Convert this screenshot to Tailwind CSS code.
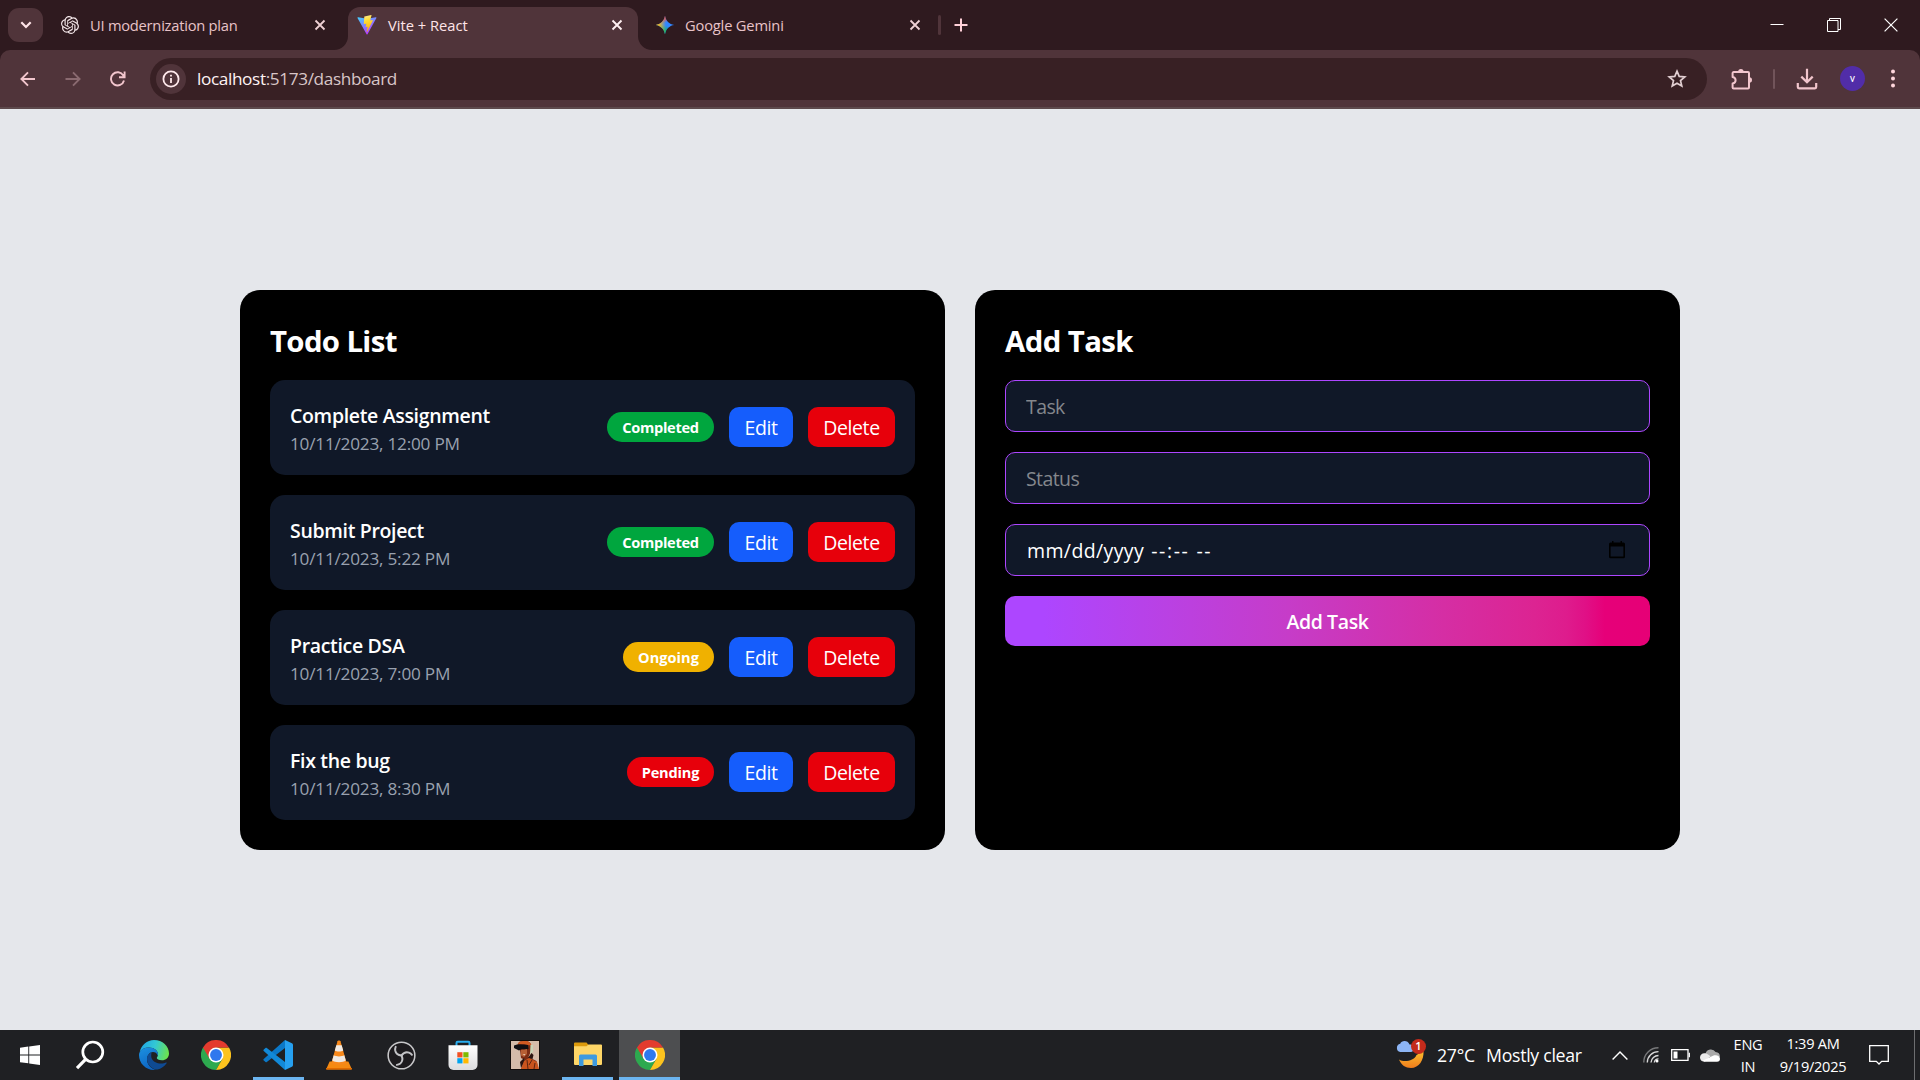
<!DOCTYPE html>
<html lang="en">
<head>
<meta charset="utf-8">
<title>Vite + React</title>
<script src="https://cdn.jsdelivr.net/npm/@tailwindcss/browser@4"></script>
</head>
<body class="flex h-[1080px] w-[1920px] flex-col overflow-hidden bg-gray-200 font-['Open_Sans','Noto_Sans',sans-serif]">

<!-- Tab strip -->
<header class="flex h-[50px] shrink-0 bg-[#2f1a1f] text-[14.7px] text-[#e8c3c8]">
  <button class="mt-2 ml-2 flex h-[34px] w-[35px] items-center justify-center rounded-[11px] bg-[#50343a]">
    <svg class="h-3 w-3" viewBox="0 0 12 12" fill="none" stroke="#ffe4e8" stroke-width="2.2"><path d="M1.3 3.3 6 8l4.7-4.7"/></svg>
  </button>
  <div class="flex h-[50px] w-[305px] items-center pl-[18px] pr-[22px]">
    <svg class="h-[18px] w-[18px]" viewBox="0 0 24 24" fill="#f3e6e8"><path d="M22.28 9.82a5.98 5.98 0 0 0-.52-4.91 6.05 6.05 0 0 0-6.51-2.9A6.07 6.07 0 0 0 4.98 4.18a5.98 5.98 0 0 0-4 2.9 6.05 6.05 0 0 0 .74 7.1 5.98 5.98 0 0 0 .51 4.91 6.05 6.05 0 0 0 6.52 2.9A5.98 5.98 0 0 0 13.26 24a6.06 6.06 0 0 0 5.77-4.21 5.99 5.99 0 0 0 4-2.9 6.06 6.06 0 0 0-.75-7.07zM13.26 22.43a4.48 4.48 0 0 1-2.88-1.04l.14-.08 4.78-2.76a.8.8 0 0 0 .39-.68v-6.74l2.02 1.17a.07.07 0 0 1 .04.05v5.58a4.5 4.5 0 0 1-4.49 4.5zM3.6 18.3a4.47 4.47 0 0 1-.54-3.01l.14.08 4.78 2.76a.77.77 0 0 0 .78 0l5.84-3.37v2.33a.08.08 0 0 1-.03.06L9.74 19.95a4.5 4.5 0 0 1-6.14-1.65zM2.34 7.9a4.49 4.49 0 0 1 2.37-1.98v5.68a.77.77 0 0 0 .39.68l5.81 3.35-2.02 1.17a.08.08 0 0 1-.07 0L3.99 14.02A4.5 4.5 0 0 1 2.34 7.9zm16.6 3.86-5.84-3.39 2.02-1.16a.08.08 0 0 1 .07 0l4.83 2.79a4.49 4.49 0 0 1-.68 8.1v-5.67a.79.79 0 0 0-.4-.67zm2.01-3.03-.14-.08-4.78-2.78a.78.78 0 0 0-.78 0L9.41 9.23V6.9a.07.07 0 0 1 .03-.06l4.83-2.79a4.5 4.5 0 0 1 6.68 4.68zM8.31 12.86l-2.02-1.16a.08.08 0 0 1-.04-.06V6.07a4.5 4.5 0 0 1 7.37-3.45l-.14.08-4.78 2.76a.8.8 0 0 0-.39.68zm1.1-2.37 2.6-1.5 2.6 1.5v3l-2.6 1.5-2.6-1.5z"/></svg>
    <span class="ml-[11px] tracking-[-0.24px]">UI modernization plan</span>
    <svg class="ml-auto h-3 w-3" viewBox="0 0 12 12" stroke="#efd0d4" stroke-width="1.8"><path d="M1.5 1.5l9 9M10.5 1.5l-9 9"/></svg>
  </div>
  <div class="relative mt-[7px] flex h-[43px] w-[290px] items-center rounded-t-xl bg-[#50343a] pr-[15px] pb-[7px] pl-[9px] text-[#ffe4e8]">
    <svg class="absolute bottom-0 -left-3.5 h-3.5 w-3.5" viewBox="0 0 14 14" fill="#50343a"><path d="M14 0v14H0A14 14 0 0 0 14 0z"/></svg>
    <svg class="absolute -right-3.5 bottom-0 h-3.5 w-3.5" viewBox="0 0 14 14" fill="#50343a"><path d="M0 0v14h14A14 14 0 0 1 0 0z"/></svg>
    <svg class="h-5 w-5" viewBox="0 0 20 20">
      <defs>
        <linearGradient id="va" x1="0" y1="0" x2=".6" y2="1"><stop stop-color="#41d1ff"/><stop offset="1" stop-color="#bd34fe"/></linearGradient>
        <linearGradient id="vb" x1=".4" y1="0" x2=".6" y2="1"><stop stop-color="#ffea83"/><stop offset=".3" stop-color="#ffdd35"/><stop offset="1" stop-color="#ffa800"/></linearGradient>
      </defs>
      <path d="M19.4 2.9 10.5 19.3c-.2.4-.7.4-.9 0L.5 2.9c-.2-.4.1-.8.6-.7L10 3.8l8.8-1.6c.5-.1.8.3.6.7z" fill="url(#va)"/>
      <path d="M14.2.1 7.5 1.4c-.2 0-.2.1-.2.3l-.5 7.2c0 .2.2.3.3.2l1.9-.4c.2 0 .4.1.3.3l-.6 2.8c0 .2.2.4.4.3l1.1-.3c.2-.1.4.1.4.3l-.9 4.4c-.1.3.3.4.5.2l.1-.2 5.500-11c.1-.2-.1-.4-.3-.4l-2 .4c-.2 0-.3-.1-.3-.3L14.5.4c.1-.2-.1-.3-.3-.3z" fill="url(#vb)"/>
    </svg>
    <span class="ml-[11px]">Vite + React</span>
    <svg class="ml-auto h-3 w-3" viewBox="0 0 12 12" stroke="#fff0f2" stroke-width="1.9"><path d="M1.5 1.5l9 9M10.5 1.5l-9 9"/></svg>
  </div>
  <div class="flex h-[50px] w-[300px] items-center pr-[17px] pl-[17px]">
    <svg class="h-5 w-5" viewBox="0 0 20 20">
      <defs>
        <linearGradient id="gy" x1="0" x2=".55" y1="0" y2="0"><stop stop-color="#fbbc04"/><stop offset=".3" stop-color="#f5b820"/><stop offset="1" stop-color="#f5b820" stop-opacity="0"/></linearGradient>
        <linearGradient id="gr" x1="0" x2=".2" y1="0" y2=".5"><stop stop-color="#f94543"/><stop offset=".5" stop-color="#f94543"/><stop offset="1" stop-color="#f94543" stop-opacity="0"/></linearGradient>
        <linearGradient id="gg" x1=".3" x2=".45" y1="1" y2=".5"><stop stop-color="#08b962"/><stop offset=".4" stop-color="#08b962"/><stop offset="1" stop-color="#08b962" stop-opacity="0"/></linearGradient>
      </defs>
      <path d="M10 .8c.6 4.8 4.400 8.600 9.200 9.200-4.800.6-8.600 4.400-9.200 9.200C9.400 14.400 5.600 10.600.8 10 5.600 9.400 9.400 5.600 10 .8z" fill="#3186ff"/>
      <path d="M10 .8c.6 4.800 4.400 8.600 9.200 9.200-4.800.6-8.600 4.400-9.200 9.200C9.400 14.400 5.600 10.600.8 10 5.600 9.400 9.400 5.600 10 .8z" fill="url(#gg)"/>
      <path d="M10 .8c.6 4.800 4.400 8.600 9.200 9.200-4.800.6-8.600 4.400-9.200 9.200C9.400 14.400 5.600 10.600.8 10 5.600 9.400 9.400 5.600 10 .8z" fill="url(#gr)"/>
      <path d="M10 .8c.6 4.800 4.400 8.600 9.200 9.200-4.800.6-8.600 4.400-9.200 9.200C9.400 14.400 5.600 10.600.8 10 5.600 9.400 9.400 5.600 10 .8z" fill="url(#gy)"/>
    </svg>
    <span class="ml-2.5 tracking-[-0.18px]">Google Gemini</span>
    <svg class="ml-auto h-3 w-3" viewBox="0 0 12 12" stroke="#efd0d4" stroke-width="1.8"><path d="M1.5 1.5l9 9M10.5 1.5l-9 9"/></svg>
  </div>
  <div class="mt-[15px] h-5 w-[2.5px] rounded-full bg-[#50343a]"></div>
  <svg class="mt-[18px] ml-[13px] h-3.5 w-3.5" viewBox="0 0 14 14" stroke="#ffd0d8" stroke-width="2"><path d="M7 .5v13M.5 7h13"/></svg>
  <div class="mr-[22px] ml-auto flex items-center gap-[43px] pb-px">
    <svg class="h-3.5 w-3.5" viewBox="0 0 14 14" stroke="#fff" stroke-width="1"><path d="M.5 6.5h13"/></svg>
    <svg class="h-3.5 w-3.5" viewBox="0 0 14 14" fill="none" stroke="#fff" stroke-width="1"><path d="M.5 2.5h10.500v11H.500zM2.500 2.500V.500h11v11h-2.500"/></svg>
    <svg class="h-3.5 w-3.5" viewBox="0 0 14 14" stroke="#fff" stroke-width="1.2"><path d="M.6.6l12.800 12.800M13.4.6.6 13.4"/></svg>
  </div>
</header>

<!-- Toolbar -->
<div class="h-[59px] shrink-0 bg-[#2f1a1f]">
<nav class="flex h-full items-center rounded-t-[10px] border-b-2 border-[#5d494c] bg-[#50343a] pl-5">
  <svg class="h-4 w-4" viewBox="0 0 16 16" fill="none" stroke="#f2c6cd" stroke-width="1.9"><path d="M15 8H1.5M8 1.3 1.4 8 8 14.7"/></svg>
  <svg class="ml-[29px] h-4 w-4" viewBox="0 0 16 16" fill="none" stroke="#8a6a70" stroke-width="1.9"><path d="M.5 8h14M8 1.3 14.6 8 8 14.7"/></svg>
  <svg class="ml-[29px] h-4 w-4" viewBox="0 0 16 16" fill="none" stroke="#f2c6cd" stroke-width="1.9"><path d="M14 9.5A6.6 6.6 0 1 1 13.3 4.5L14.200 5.800M14.6.5v5.700H9"/></svg>
  <div class="ml-6 flex h-[42px] w-[1557px] items-center rounded-full bg-[#382024] pr-5 pl-1.5">
    <div class="flex h-[30px] w-[30px] items-center justify-center rounded-full bg-[#50343a]">
      <svg class="h-[18px] w-[18px]" viewBox="0 0 18 18" fill="none" stroke="#ffe9ec" stroke-width="1.8"><circle cx="9" cy="9" r="7.6"/><path d="M9 8v5M9 4.7v1.9"/></svg>
    </div>
    <span class="mt-px ml-[11px] text-[17.2px] tracking-[-0.37px] text-[#d8c6c8]"><span class="text-[#fff3f4]">localhost</span>:5173/dashboard</span>
    <svg class="ml-auto h-[19px] w-5" viewBox="0 0 20 19" fill="none" stroke="#e2cfd2" stroke-width="1.7"><path d="M10 2.2l2.2 5.200 5.600.5-4.300 3.700 1.300 5.500L10 14.200l-4.800 2.900 1.300-5.500L2.200 7.900l5.600-.5z"/></svg>
  </div>
  <svg class="ml-6 h-[22px] w-[22px]" viewBox="0 0 22 22" fill="none" stroke="#f2c6cd" stroke-width="2"><path d="M1.6 5.1a1 1 0 0 1 1-1H17a1 1 0 0 1 1 1V19.5a1 1 0 0 1-1 1H2.6a1 1 0 0 1-1-1V15.500c4-.8 4-5.600 0-6.400z" stroke-linejoin="round"/><path d="M7.200 3.800a2.700 2.700 0 0 1 5.400 0zM18.300 9.300a2.700 2.700 0 0 1 0 5.400z" fill="#f2c6cd" stroke="none"/></svg>
  <div class="ml-5 h-5 w-0.5 rounded-full bg-[#71545a]"></div>
  <svg class="ml-[21px] h-[22px] w-[22px]" viewBox="0 0 22 22" fill="none" stroke="#f2c6cd" stroke-width="2.2"><path d="M11 .8v13M5.3 8.600 11 14.300l5.700-5.700M1.800 15v4a1.300 1.300 0 0 0 1.300 1.300h15.800a1.300 1.300 0 0 0 1.300-1.300v-4"/></svg>
  <div class="ml-[22px] flex h-[25px] w-[25px] items-center justify-center rounded-full bg-[#512da8] pt-px font-[Roboto] text-[11px] text-white">v</div>
  <svg class="ml-[26px] h-[19px] w-1" viewBox="0 0 4 19" fill="#ffd6dc"><circle cx="2" cy="2.4" r="2"/><circle cx="2" cy="9.4" r="2"/><circle cx="2" cy="16.4" r="2"/></svg>
</nav>
</div>

<!-- Dashboard -->
<main class="flex grow justify-center gap-[30px] pt-[181px]">
  <section class="h-[560px] w-[705px] rounded-[20px] bg-black p-[30px]">
    <h2 class="h-10 pt-px text-[29.4px] leading-10 font-bold tracking-[-0.65px] text-white">Todo List</h2>
    <ul id="tasks" class="mt-5 flex flex-col gap-5"></ul>
  </section>
  <section class="h-[560px] w-[705px] rounded-[20px] bg-black p-[30px]">
    <h2 class="h-10 pt-px text-[29.4px] leading-10 font-bold tracking-[-0.6px] text-white">Add Task</h2>
    <form class="mt-5 flex flex-col gap-5 text-[19.5px]">
      <input type="text" placeholder="Task" class="h-[52px] rounded-[10px] border border-purple-500 bg-gray-900 px-5 pt-px tracking-[-0.6px] text-white placeholder:text-[#84878d]">
      <input type="text" placeholder="Status" class="h-[52px] rounded-[10px] border border-purple-500 bg-gray-900 px-5 pt-px tracking-[-0.6px] text-white placeholder:text-[#84878d]">
      <div class="flex h-[52px] items-center justify-between rounded-[10px] border border-purple-500 bg-gray-900 pr-6 pl-[21px] text-white">
        <span class="pt-0.5"><span class="tracking-[0.38px]">mm/dd/yyyy</span><span class="ml-[7px] tracking-[1.6px]">--:--</span><span class="ml-[7px] tracking-[1.6px]">--</span></span>
        <svg class="h-[18px] w-4" viewBox="0 0 16 18" fill="#000"><path d="M3 0h1.5v1.500h7V0H13v1.500h1.500A1.500 1.500 0 0 1 16 3v12.700a1.500 1.500 0 0 1-1.500 1.500h-13A1.500 1.500 0 0 1 0 15.700V3a1.500 1.500 0 0 1 1.500-1.500H3zM1.600 5.400v10.200h12.800V5.400z"/></svg>
      </div>
      <button type="button" class="h-[50px] rounded-[10px] bg-[linear-gradient(90deg,#ad46ff_0%,#ad46ff_6%,#c63cc8_44%,#d52ea4_68%,#dc2492_82%,#de1c8d_87%,#e01086_90%,#e60079_93%,#e60076_100%)] pt-0.5 font-semibold tracking-[-0.4px] text-white">Add Task</button>
    </form>
  </section>
</main>

<!-- Taskbar -->
<footer class="flex h-[50px] shrink-0 bg-[#1f2023] text-white">
  <div class="flex h-[50px] w-[60px] items-center justify-center">
    <svg class="h-5 w-5" viewBox="0 0 20 20" fill="#fff"><path d="M0 2.8 8.300 1.600V9.500H0zM9.200 1.500 20 0v9.500H9.200zM0 10.400h8.300v7.900L0 17.200zM9.200 10.400H20V20L9.200 18.400z"/></svg>
  </div>
  <div class="flex h-[50px] w-[60px] items-center justify-center">
    <svg class="h-[30px] w-[30px]" viewBox="0 0 30 30" fill="none" stroke="#fff" stroke-width="2.7"><circle cx="17.8" cy="12" r="10"/><path d="M10.800 19.200 2 28.200" stroke-width="3.2"/></svg>
  </div>
  <div class="flex h-[50px] w-[68px] items-center justify-center">
    <svg class="h-[30px] w-[30px]" viewBox="0 0 30 30">
      <defs>
        <linearGradient id="e1" x1="0" y1=".3" x2="1" y2=".5"><stop stop-color="#1fa5e6"/><stop offset=".5" stop-color="#33c8d4"/><stop offset="1" stop-color="#6be34e"/></linearGradient>
        <linearGradient id="e2" x1=".2" y1="0" x2=".6" y2="1"><stop stop-color="#1b8fe0"/><stop offset="1" stop-color="#0c62c0"/></linearGradient>
      </defs>
      <path d="M.8 12C2.200 5 8 0 15 0c8.500 0 15 6 15 13.500 0 4-3.200 6.800-7 6.800-3.400 0-5.200-1.200-5.200-2.300 0-.9 1.200-1.400 1.200-3.600 0-4-4-7-9-7C5.500 7.400 2.500 9.200.8 12z" fill="url(#e1)"/>
      <path d="M10 7.400c5 0 9 3 9 7 0 .5-.1.900-.2 1.300C18 13 16 12 14 12c-3.300 0-6 3.300-6 7.500 0 4.800 3.800 9 8.500 10.400-.5.100-1 .1-1.500.1C6.700 30 0 23.300 0 15c0-4.600 4.500-7.600 10-7.600z" fill="url(#e2)"/>
      <path d="M12.500 12.300C9.500 14 7.700 16.300 8 19.500c.4 5.600 5.500 10.300 10.500 10.100 3.500-.7 7-3.200 9.100-6.300.4-.7-.1-1-.7-.7-1.300.6-3 1-4.700 1-5.700 0-10-3.300-10-7.600 0-1.400.2-2.700.3-3.700z" fill="#0f4a92"/>
    </svg>
  </div>
  <div class="flex h-[50px] w-[56px] items-center justify-center">
    <svg class="h-[30px] w-[30px]" viewBox="0 0 48 48">
      <path d="M24 24 3.200 12A24 24 0 0 0 24 48L34.400 30z" fill="#2da94f"/>
      <path d="M24 48A24 24 0 0 0 44.800 12H24L34.400 30z" fill="#fcc31e"/>
      <path d="M24 12h20.800A24 24 0 0 0 3.200 12l10.400 18z" fill="#e33b2e"/>
      <circle cx="24" cy="24" r="12" fill="#fff"/><circle cx="24" cy="24" r="9.5" fill="#2f78ee"/>
    </svg>
  </div>
  <div class="ml-[9px] flex h-[50px] w-[51px] items-center justify-center border-b-3 border-[#6cb5f0]">
    <svg class="mr-px -mb-[3px] h-[30px] w-[30px]" viewBox="0 0 30 30">
      <path d="M1 18.800 22 0v8L3.800 22c-.4.300-.9.300-1.300 0L.8 20.500a1.100 1.100 0 0 1 .2-1.700z" fill="#0b78c8"/>
      <path d="M1 11.200 22 30v-8L3.800 8c-.4-.3-.9-.3-1.300 0L.8 9.500a1.100 1.100 0 0 0 .2 1.700z" fill="#1289d8"/>
      <path d="M22 0l6.900 3.200c.7.300 1.100 1 1.100 1.700v20.200c0 .7-.4 1.400-1.100 1.700L22 30z" fill="#26a0f0"/>
    </svg>
  </div>
  <div class="ml-[4px] flex h-[50px] w-[62px] items-center justify-center">
    <svg class="h-[30px] w-[26px]" viewBox="0 0 26 30">
      <path d="M3.600 21.500h18.800L25.500 28.500a.7.700 0 0 1-.6 1H1.100a.7.700 0 0 1-.6-1z" fill="#f58a12"/>
      <path d="M0 28h26v1.500H0z" fill="#e06a00"/>
      <path d="M11.500 1.200c.3-1 2.700-1 3 0L20.600 23c-2 2.600-13.200 2.600-15.200 0z" fill="#f7881a"/>
      <path d="M10.300 5.200h5.400l1.500 5.300c-1.800 1.400-6.600 1.400-8.400 0zM7.700 15.300c2.400 1.500 8.200 1.500 10.600 0l1.500 5.200c-2.600 2.300-11 2.300-13.600 0z" fill="#eee9e4"/>
    </svg>
  </div>
  <div class="flex h-[50px] w-[62px] items-center justify-center">
    <svg class="h-[29px] w-[29px]" viewBox="0 0 30 30" fill="none"><circle cx="15" cy="15" r="13.8" fill="#1d1b1e" stroke="#c7c7c9" stroke-width="1.6"/>
      <g stroke="#c3c3c6" stroke-width="2" stroke-linecap="round"><path d="M15 15c-3.500-.3-6-2.500-6.500-5.200-.2-1.400 0-2.700.5-3.800"/><path d="M15 15c-3.500-.3-6-2.500-6.500-5.200-.2-1.400 0-2.700.5-3.800" transform="rotate(120 15 15)"/><path d="M15 15c-3.500-.3-6-2.500-6.500-5.200-.2-1.400 0-2.700.5-3.800" transform="rotate(240 15 15)"/></g></svg>
  </div>
  <div class="flex h-[50px] w-[62px] items-center justify-center">
    <svg class="h-[30px] w-[30px]" viewBox="0 0 30 30"><defs><linearGradient id="ms" x1="0" y1="0" x2="0" y2="1"><stop stop-color="#fff"/><stop offset="1" stop-color="#dcdcde"/></linearGradient></defs>
      <path d="M8.500 6.500V3A1.200 1.200 0 0 1 9.700 1.800h10.600A1.200 1.200 0 0 1 21.500 3v3.500" fill="none" stroke="#2aaef0" stroke-width="2"/>
      <path d="M.5 5.200h29V25a5 5 0 0 1-5 5h-19a5 5 0 0 1-5-5z" fill="url(#ms)"/>
      <path d="M9.300 12.200h5.200v5.200H9.300z" fill="#f25022"/><path d="M15.300 12.200h5.200v5.200h-5.200z" fill="#7fba00"/><path d="M9.300 18.200h5.200v5.200H9.300z" fill="#00a4ef"/><path d="M15.300 18.200h5.200v5.200h-5.200z" fill="#ffb900"/></svg>
  </div>
  <div class="flex h-[50px] w-[62px] items-center justify-center">
    <svg class="h-[30px] w-[30px]" viewBox="0 0 30 30">
      <path d="M0 0h30v30H0z" fill="#120d0b"/><path d="M1 1h28v28H1z" fill="#d4bba9"/>
      <path d="M8 4C9 1 11 .8 15 1c4 .2 6 1.500 6 5v5L18.500 17l8 4 2 8H11l4-9-4-2-1-8z" fill="#7b2c14"/>
      <path d="M8 3.500C9 1.500 12 1 15 1c4 0 6 2 6.500 4.500L14 4.500 7 5.500z" fill="#d05a22"/>
      <path d="M20.500 5H23v7l-3 2z" fill="#c8d2b4"/>
      <path d="M4 5.500c4-2 9-1.500 14-.5l.5 4-4 1-2.500-1-3 1.500L4 8z" fill="#100e12"/>
      <path d="M11 10l6-1v5l-3 3-3-1.500z" fill="#b75f34"/><path d="M12.500 14.500l3-.5-1 1.500z" fill="#f0d7c0"/>
      <path d="M18 18l3.500-5 2 2-1 4zM10 22l4-4 1 3-4 7z" fill="#2a1512"/>
      <path d="M14 21l5-3 8 4 2 7H11z" fill="#c9541d"/>
      <path d="M17 20l1 9M22 20l-3 5M25 23l-1 6" stroke="#5b2412" stroke-width="1" fill="none"/>
    </svg>
  </div>
  <div class="ml-[6px] flex h-[50px] w-[51px] items-center justify-center border-b-3 border-[#6cb5f0]">
    <svg class="-mb-[1px] h-6 w-7" viewBox="0 0 28 24">
      <path d="M0 1.500A1 1 0 0 1 1 .5h11.500L14.500 3H27a1 1 0 0 1 1 1v18H0z" fill="#dc9a0c"/>
      <path d="M0 4.200h12.500L14.500 2.500H27a1 1 0 0 1 1 1V22a1 1 0 0 1-1 1H1a1 1 0 0 1-1-1z" fill="#fed667"/>
      <path d="M5 24V14a1.500 1.500 0 0 1 1.500-1.500h15A1.500 1.500 0 0 1 23 14v10h-4.500v-6.500h-9V24z" fill="#3e9adf"/>
    </svg>
  </div>
  <div class="ml-[6px] flex h-[50px] w-[61px] items-center justify-center border-b-3 border-[#6cb5f0] bg-[#4d4e50]">
    <svg class="-mb-[3px] h-[30px] w-[30px]" viewBox="0 0 48 48">
      <path d="M24 24 3.200 12A24 24 0 0 0 24 48L34.400 30z" fill="#2da94f"/>
      <path d="M24 48A24 24 0 0 0 44.800 12H24L34.400 30z" fill="#fcc31e"/>
      <path d="M24 12h20.800A24 24 0 0 0 3.200 12l10.400 18z" fill="#e33b2e"/>
      <circle cx="24" cy="24" r="12" fill="#fff"/><circle cx="24" cy="24" r="9.5" fill="#2f78ee"/>
    </svg>
  </div>

  <!-- System tray -->
  <div class="ml-auto flex h-[50px] items-center">
    <div class="relative h-[30px] w-[30px]">
      <svg class="h-[30px] w-[30px]" viewBox="0 0 30 30">
        <defs><linearGradient id="mo" x1="0" y1="0" x2="0" y2="1"><stop stop-color="#fcc02e"/><stop offset="1" stop-color="#f07c1c"/></linearGradient></defs>
        <path d="M27.500 11c.6 9-4.500 17-12.500 17-5.500 0-9.500-2.700-12-8.500C8 22.500 18 21 20.500 15z" fill="url(#mo)"/>
        <path d="M4.200 12a4.200 4.200 0 0 1 0-8.200C5.500 0 12 0 13.500 4.500 17 4.500 18 7 18 8.500S17 12 14.500 12z" fill="#8db5f5"/>
      </svg>
      <div class="absolute -top-px right-0 flex h-[15px] w-[15px] items-center justify-center rounded-full bg-[#c42b1c] text-[11px] font-semibold">1</div>
    </div>
    <span class="ml-[11px] w-[49px] text-[17.7px] tracking-[-0.3px]">27°C</span>
    <span class="w-[126px] text-[17.7px] tracking-[-0.28px]">Mostly clear</span>
    <svg class="h-[9px] w-4" viewBox="0 0 16 9" fill="none" stroke="#fff" stroke-width="1.4"><path d="M.6 8.400 8 1l7.400 7.400"/></svg>
    <svg class="ml-[15px] h-4 w-4" viewBox="0 0 16 16" fill="none" stroke-width="1.4"><path d="M.8 15.500A14.500 14.500 0 0 1 15.500.8" stroke="#77787a"/><path d="M4.300 15.500A11 11 0 0 1 15.500 4.600M8 15.500a7.500 7.500 0 0 1 7.500-7M11.300 15.500a4 4 0 0 1 4.200-3.600" stroke="#d9d9da"/><circle cx="14" cy="14" r="1.5" fill="#fff"/></svg>
    <svg class="ml-[12px] h-3 w-[19px]" viewBox="0 0 19 12" fill="none" stroke="#fff" stroke-width="1.3"><path d="M.7.7h16.300v10.600H.7z"/><path d="M2.500 2.500h4v7h-4z" fill="#fff" stroke="none"/><path d="M18.300 3.800v4.400"/></svg>
    <svg class="ml-[10px] h-[14px] w-5" viewBox="0 0 20 14"><path d="M5.500 5.500A5.600 5.600 0 0 1 15.600 4a4.800 4.800 0 0 1 4.300 5L11 11z" fill="#a9a9a9"/><path d="M0 9.500C0 7 2 5.200 4.300 5.200c2 0 3 .6 4.200 1.600l2 1.500L5 13.500C2 14 0 12 0 9.500z" fill="#e9e9e9"/><path d="M2.500 12.800 13 7.800c3-1.300 7 0 7 3a3 3 0 0 1-3 3H4.500z" fill="#fff"/></svg>
    <div class="ml-[11px] w-[34px] text-center text-[14.6px] leading-[22px] tracking-[-0.3px]">ENG<br>IN</div>
    <div class="ml-3 w-[72px] text-center text-[14.6px] leading-[23px] tracking-[-0.27px]">1:39 AM<br>9/19/2025</div>
    <svg class="ml-[20px] h-5 w-5" viewBox="0 0 20 20" fill="none" stroke="#fff" stroke-width="1.3"><path d="M.7.7h18.600v15.600h-6.600L10 19l-2.700-2.700H.7z"/></svg>
    <div class="mr-[5px] ml-[25px] h-[50px] w-px bg-[#6d6e70]"></div>
  </div>
</footer>

<script>
  const tasks = [
    ['Complete Assignment', '10/11/2023, 12:00 PM', 'Completed', 'w-[107px] bg-green-600 tracking-[-0.3px]'],
    ['Submit Project', '10/11/2023, 5:22 PM', 'Completed', 'w-[107px] bg-green-600 tracking-[-0.3px]'],
    ['Practice DSA', '10/11/2023, 7:00 PM', 'Ongoing', 'w-[91px] bg-yellow-500'],
    ['Fix the bug', '10/11/2023, 8:30 PM', 'Pending', 'w-[87px] bg-red-600 tracking-[-0.2px]']
  ];
  document.getElementById('tasks').innerHTML = tasks.map(([title, date, status, look]) => `
    <li class="flex h-[95px] items-center gap-[15px] rounded-[15px] bg-gray-900 px-5 pb-px text-white">
      <div class="mr-auto pt-[3px]">
        <h3 class="text-[19.5px] leading-[30px] font-semibold tracking-[-0.33px]">${title}</h3>
        <p class="text-[17.2px] leading-[25px] tracking-[-0.22px] text-gray-400">${date}</p>
      </div>
      <span class="flex h-[30px] items-center justify-center rounded-full pt-px text-[14.6px] font-bold ${look}">${status}</span>
      <button class="h-10 w-16 rounded-[10px] bg-blue-600 pt-px text-[19.5px] tracking-[-0.4px]">Edit</button>
      <button class="h-10 w-[87px] rounded-[10px] bg-red-600 pt-px text-[19.5px] tracking-[-0.4px]">Delete</button>
    </li>`).join('');
</script>
</body>
</html>
